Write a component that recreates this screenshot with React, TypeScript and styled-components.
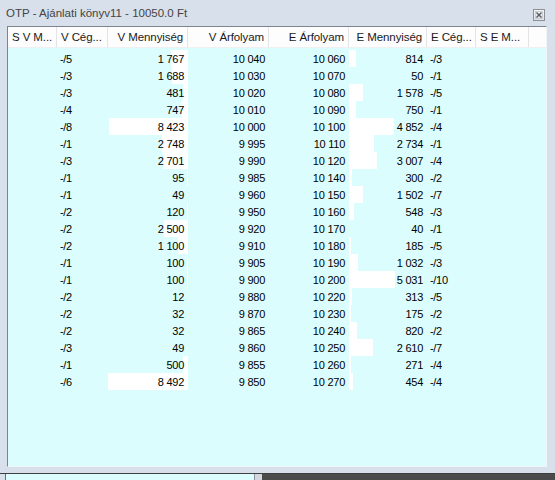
import React from 'react';
import styled, { createGlobalStyle } from 'styled-components';

const Global = createGlobalStyle`
  html, body { margin: 0; padding: 0; background: #4b4b4b; }
  body { width: 555px; height: 480px; overflow: hidden; font-family: "Liberation Sans", Arial, sans-serif; }
  * { box-sizing: border-box; }
`;

const COLS = '49px 51px 80px 81px 80px 78px 49px 53px';
const QTY_COL = 80;
const E_QTY_COL = 78;

type Row = [string, number, string, string, number, string];

const rows: Row[] = [
  ['-/5', 1767, '10 040', '10 060', 814, '-/3'],
  ['-/3', 1688, '10 030', '10 070', 50, '-/1'],
  ['-/3', 481, '10 020', '10 080', 1578, '-/5'],
  ['-/4', 747, '10 010', '10 090', 750, '-/1'],
  ['-/8', 8423, '10 000', '10 100', 4852, '-/4'],
  ['-/1', 2748, '9 995', '10 110', 2734, '-/1'],
  ['-/3', 2701, '9 990', '10 120', 3007, '-/4'],
  ['-/1', 95, '9 985', '10 140', 300, '-/2'],
  ['-/1', 49, '9 960', '10 150', 1502, '-/7'],
  ['-/2', 120, '9 950', '10 160', 548, '-/3'],
  ['-/2', 2500, '9 920', '10 170', 40, '-/1'],
  ['-/2', 1100, '9 910', '10 180', 185, '-/5'],
  ['-/1', 100, '9 905', '10 190', 1032, '-/3'],
  ['-/1', 100, '9 900', '10 200', 5031, '-/10'],
  ['-/2', 12, '9 880', '10 220', 313, '-/5'],
  ['-/2', 32, '9 870', '10 230', 175, '-/2'],
  ['-/2', 32, '9 865', '10 240', 820, '-/2'],
  ['-/3', 49, '9 860', '10 250', 2610, '-/7'],
  ['-/1', 500, '9 855', '10 260', 271, '-/4'],
  ['-/6', 8492, '9 850', '10 270', 454, '-/4'],
];

const MAX = Math.max(...rows.map((r) => Math.max(r[1], r[4])));

const fmt = (n: number) => n.toString().replace(/\B(?=(\d{3})+(?!\d))/g, ' ');

const Page = styled.div`
  display: flex;
  flex-direction: column;
  width: 555px;
  height: 480px;
`;

const Window = styled.div`
  flex: none;
  height: 474px;
  display: flex;
  flex-direction: column;
  background: #d8e0eb;
  border-bottom: 1px solid #3f3f3f;
`;

const TitleBar = styled.div`
  flex: none;
  height: 26px;
  display: flex;
  align-items: center;
  justify-content: space-between;
  padding: 0 10px 1px 6px;
`;

const Title = styled.span`
  font-family: "Liberation Sans", Arial, sans-serif;
  font-size: 11.5px;
  color: #444;
  white-space: nowrap;
`;

const CloseBox = styled.div`
  width: 12px;
  height: 12px;
  border: 1px solid #8c8f94;
  background: linear-gradient(#f4f6f8, #dfe3e8);
  display: flex;
  align-items: center;
  justify-content: center;
  margin-top: 4px;
`;

const Frame = styled.div`
  flex: 1;
  margin: 0 8px 6px 7px;
  border: 1px solid #7d848d;
  border-right-color: #f2f5f8;
  border-bottom-color: #f2f5f8;
  background: #dcfdfd;
  display: flex;
  flex-direction: column;
  overflow: hidden;
`;

const HeaderRow = styled.div`
  flex: none;
  height: 21px;
  display: grid;
  grid-template-columns: ${COLS} 1fr;
  background: #fdfdfd;
  border-bottom: 1px solid #eef0f2;
`;

const HeadCell = styled.div<{ $align?: 'left' | 'right' }>`
  display: flex;
  align-items: center;
  justify-content: ${(p) => (p.$align === 'right' ? 'flex-end' : 'flex-start')};
  padding: 0 4px 0 4px;
  border-right: 1px solid #e2e4e7;
  font-size: 11.5px;
  letter-spacing: -0.1px;
  color: #1a1a1a;
  white-space: nowrap;
  overflow: hidden;
  &:last-child { border-right: none; }
`;

const Body = styled.div`
  flex: 1;
  display: flex;
  flex-direction: column;
  padding-top: 2px;
`;

const DataRow = styled.div`
  display: grid;
  grid-template-columns: ${COLS};
  height: 17px;
`;

const Cell = styled.div<{ $align?: 'left' | 'right' }>`
  display: flex;
  align-items: center;
  justify-content: ${(p) => (p.$align === 'right' ? 'flex-end' : 'flex-start')};
  padding: 0 4px 0 3px;
  font-size: 11px;
  letter-spacing: -0.3px;
  word-spacing: 0.3px;
  color: #000;
  white-space: nowrap;
`;

const Below = styled.div`
  flex: 1;
  display: flex;
`;

const BelowEdge = styled.div`
  width: 6px;
  background: #d8e0eb;
  border-right: 1px solid #6c6c6c;
`;

const BelowPanel = styled.div`
  width: 249px;
  background: #dcfdfd;
  border-right: 1px solid #8d9299;
`;

const BelowGap = styled.div`
  width: 7px;
  background: #d4d8de;
`;

const BelowDark = styled.div`
  flex: 1;
  background: #4b4b4b;
`;

const CloseIcon = () => (
  <svg width="8" height="8" viewBox="0 0 8 8">
    <path d="M1.5 1.5 L6.5 6.5 M6.5 1.5 L1.5 6.5" stroke="#555a60" strokeWidth="1.4" fill="none" />
    <rect x="0.5" y="0.5" width="7" height="7" fill="none" stroke="#b4b8be" strokeWidth="0.6" />
  </svg>
);

export default function App() {
  return (
    <Page>
      <Global />
      <Window>
        <TitleBar>
          <Title>OTP - Ajánlati könyv11 - 10050.0 Ft</Title>
          <CloseBox>
            <CloseIcon />
          </CloseBox>
        </TitleBar>
        <Frame>
          <HeaderRow>
            <HeadCell>S V M...</HeadCell>
            <HeadCell>V Cég...</HeadCell>
            <HeadCell $align="right">V Mennyiség</HeadCell>
            <HeadCell $align="right">V Árfolyam</HeadCell>
            <HeadCell $align="right">E Árfolyam</HeadCell>
            <HeadCell $align="right">E Mennyiség</HeadCell>
            <HeadCell>E Cég...</HeadCell>
            <HeadCell>S E M...</HeadCell>
            <HeadCell />
          </HeaderRow>
          <Body>
            {rows.map((r, i) => {
              const vw = Math.round((r[1] / MAX) * QTY_COL);
              const ew = Math.round((r[4] / MAX) * E_QTY_COL);
              return (
                <DataRow key={i}>
                  <Cell />
                  <Cell>{r[0]}</Cell>
                  <Cell
                    $align="right"
                    style={{ background: `linear-gradient(to left, #ffffff ${vw}px, transparent ${vw}px)` }}
                  >
                    {fmt(r[1])}
                  </Cell>
                  <Cell $align="right">{r[2]}</Cell>
                  <Cell $align="right">{r[3]}</Cell>
                  <Cell
                    $align="right"
                    style={{ background: `linear-gradient(to right, #ffffff ${ew}px, transparent ${ew}px)` }}
                  >
                    {fmt(r[4])}
                  </Cell>
                  <Cell>{r[5]}</Cell>
                  <Cell />
                </DataRow>
              );
            })}
          </Body>
        </Frame>
      </Window>
      <Below>
        <BelowEdge />
        <BelowPanel />
        <BelowGap />
        <BelowDark />
      </Below>
    </Page>
  );
}
